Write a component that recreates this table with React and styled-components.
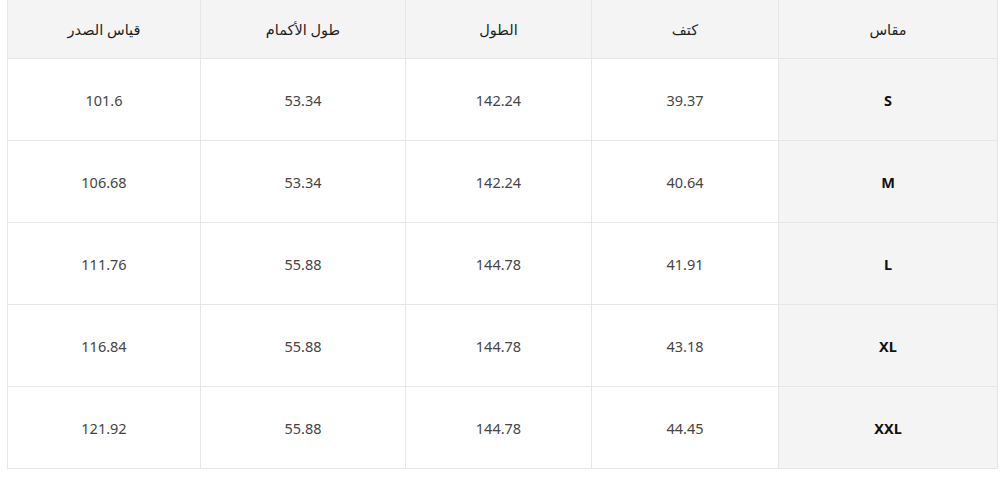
import React from 'react'
import styled, { createGlobalStyle } from 'styled-components'

const GlobalStyle = createGlobalStyle`
  html, body {
    margin: 0;
    padding: 0;
    background: #fff;
  }
  body {
    font-family: "Noto Sans", "DejaVu Sans", sans-serif;
  }
`

const Wrap = styled.div`
  padding: 0 2px 0 7px;
  margin-top: -2px;
`

const Table = styled.table`
  direction: rtl;
  width: 990px;
  border-collapse: collapse;
  table-layout: fixed;
  font-size: 14.5px;
`

const HeadCell = styled.th`
  height: 59px;
  padding: 0;
  background: #f4f4f4;
  border: 1px solid #e6e6e6;
  color: #1e1e1e;
  font-weight: 500;
  text-align: center;
  vertical-align: middle;
  width: ${p => p.$w}px;
`

const Cell = styled.td`
  height: 81px;
  padding: 0;
  border: 1px solid #e6e6e6;
  text-align: center;
  vertical-align: middle;
  background: ${p => (p.$label ? '#f4f4f4' : '#fff')};
  color: ${p => (p.$label ? '#111' : '#454545')};
  font-weight: ${p => (p.$label ? 700 : 400)};
`

const columns = [
  { title: 'مقاس', w: 218 },
  { title: 'كتف', w: 186 },
  { title: 'الطول', w: 185 },
  { title: 'طول الأكمام', w: 204 },
  { title: 'قياس الصدر', w: 192 },
]

const rows = [
  ['S', '39.37', '142.24', '53.34', '101.6'],
  ['M', '40.64', '142.24', '53.34', '106.68'],
  ['L', '41.91', '144.78', '55.88', '111.76'],
  ['XL', '43.18', '144.78', '55.88', '116.84'],
  ['XXL', '44.45', '144.78', '55.88', '121.92'],
]

const App = () => (
  <>
    <GlobalStyle />
    <Wrap>
      <Table>
        <thead>
          <tr>
            {columns.map(c => (
              <HeadCell key={c.title} $w={c.w}>
                {c.title}
              </HeadCell>
            ))}
          </tr>
        </thead>
        <tbody>
          {rows.map(r => (
            <tr key={r[0]}>
              {r.map((v, i) => (
                <Cell key={i} $label={i === 0}>
                  {v}
                </Cell>
              ))}
            </tr>
          ))}
        </tbody>
      </Table>
    </Wrap>
  </>
)

export default App
